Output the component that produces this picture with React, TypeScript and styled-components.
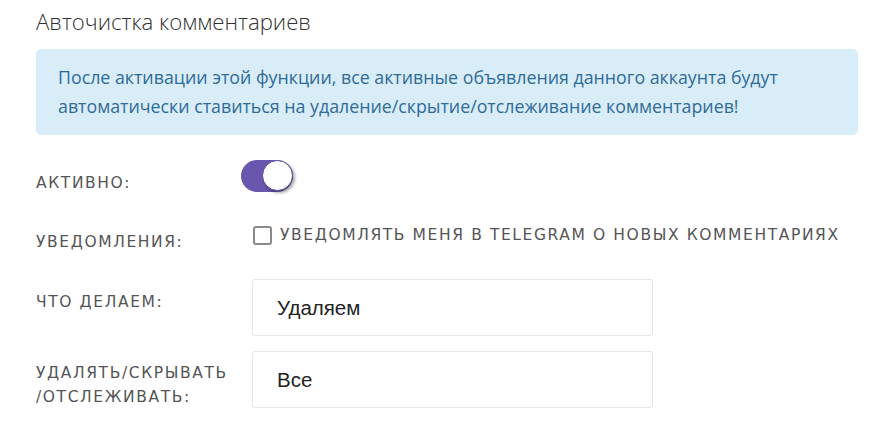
import React, { useState } from "react";
import styled, { createGlobalStyle } from "styled-components";

const GlobalStyle = createGlobalStyle`
  html, body {
    margin: 0;
    padding: 0;
    background: #ffffff;
  }
`;

const Page = styled.div`
  width: 893px;
  height: 442px;
  box-sizing: border-box;
  padding: 6px 35px 0 36px;
  overflow: hidden;
`;

const Title = styled.h2`
  margin: 0;
  font-family: "Open Sans", sans-serif;
  font-weight: 300;
  font-size: 22.2px;
  line-height: 32px;
  color: #333;
`;

const Alert = styled.div`
  margin-top: 11px;
  height: 86px;
  box-sizing: border-box;
  padding: 14px 22px;
  background: #d9edf8;
  border-radius: 5px;
  font-family: "Open Sans", sans-serif;
  font-size: 17.8px;
  line-height: 29px;
  color: #2f6b99;
`;

const Row = styled.div<{ $top: number }>`
  display: flex;
  align-items: flex-start;
  margin-top: ${(p) => p.$top}px;
`;

const Label = styled.div<{ $pad: number }>`
  width: 216px;
  flex-shrink: 0;
  padding-top: ${(p) => p.$pad}px;
  font-family: "DejaVu Sans", sans-serif;
  font-size: 15.5px;
  line-height: 24px;
  letter-spacing: 1.6px;
  text-transform: uppercase;
  color: #555;
`;

const Switch = styled.button<{ $on: boolean }>`
  position: relative;
  width: 52px;
  height: 32px;
  margin-left: -11px;
  padding: 0;
  border: none;
  border-radius: 16px;
  background: ${(p) => (p.$on ? "#6857ad" : "#cccccc")};
  cursor: pointer;

  &::after {
    content: "";
    position: absolute;
    top: 0;
    left: ${(p) => (p.$on ? "21px" : "0")};
    width: 29px;
    height: 29px;
    border-radius: 50%;
    background: #fff;
    border: 1px solid #5b4aa0;
    box-shadow: 2px 2px 3px rgba(0, 0, 0, 0.35);
  }
`;

const CheckLabel = styled.label`
  display: flex;
  align-items: center;
  gap: 8px;
  margin-left: 1px;
  font-family: "DejaVu Sans", sans-serif;
  font-size: 15.5px;
  line-height: 24px;
  letter-spacing: 1.6px;
  text-transform: uppercase;
  white-space: nowrap;
  color: #555;
  cursor: pointer;
`;

const Box = styled.span<{ $checked: boolean }>`
  flex-shrink: 0;
  width: 15px;
  height: 15px;
  border: 2px solid #8a8a8a;
  border-radius: 3px;
  background: ${(p) => (p.$checked ? "#6857ad" : "#fff")};
`;

const Select = styled.div`
  width: 401px;
  height: 57px;
  box-sizing: border-box;
  display: flex;
  align-items: center;
  padding-left: 24px;
  border: 1px solid #e6e6e6;
  border-radius: 3px;
  font-family: "Liberation Sans", Arial, sans-serif;
  font-size: 20.5px;
  color: #222;
`;

export default function App() {
  const [active, setActive] = useState(true);
  const [notify, setNotify] = useState(false);

  return (
    <>
      <GlobalStyle />
      <Page>
        <Title>Авточистка комментариев</Title>
        <Alert>
          После активации этой функции, все активные объявления данного аккаунта будут
          автоматически ставиться на удаление/скрытие/отслеживание комментариев!
        </Alert>

        <Row $top={25}>
          <Label $pad={11}>Активно:</Label>
          <Switch $on={active} onClick={() => setActive(!active)} />
        </Row>

        <Row $top={28}>
          <Label $pad={7}>Уведомления:</Label>
          <CheckLabel onClick={() => setNotify(!notify)}>
            <Box $checked={notify} />
            Уведомлять меня в Telegram о новых комментариях
          </CheckLabel>
        </Row>

        <Row $top={25}>
          <Label $pad={11}>Что делаем:</Label>
          <Select>Удаляем</Select>
        </Row>

        <Row $top={15}>
          <Label $pad={10}>
            Удалять/скрывать
            <br />
            /отслеживать:
          </Label>
          <Select>Все</Select>
        </Row>
      </Page>
    </>
  );
}
